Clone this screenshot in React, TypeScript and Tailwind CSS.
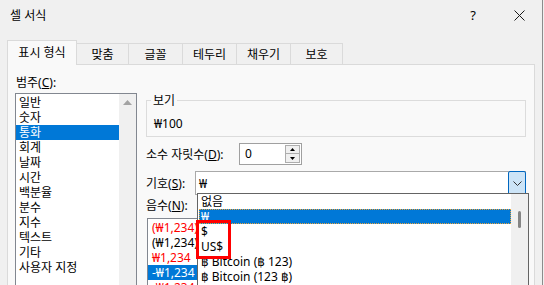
export default function App() {
  const cats = ['일반', '숫자', '통화', '회계', '날짜', '시간', '백분율', '분수', '지수', '텍스트', '기타', '사용자 지정'];
  const negs: { t: string; red: boolean; sel?: boolean }[] = [
    { t: '(₩1,234)', red: true },
    { t: '(₩1,234)', red: false },
    { t: '₩1,234', red: true },
    { t: '-₩1,234', red: false, sel: true },
    { t: '-₩1,234', red: true },
  ];
  return (
    <div className="relative w-[544px] h-[285px] overflow-hidden bg-[#f0f0f0] text-[12px] leading-[15px] text-black font-['Noto_Sans','Noto_Sans_CJK_KR','DejaVu_Sans',sans-serif]">
      <div className="w-[543px] h-full border-r border-[#8c8c8c]">
        {/* title bar */}
        <div className="h-[30px] flex items-center pl-[10px]">
          <span>셀 서식</span>
          <div className="flex-1" />
          <div className="w-[46px] h-[30px] flex items-center justify-center text-[13px]">?</div>
          <div className="w-[46px] h-[30px] flex items-center justify-center">
            <svg width="11" height="11" viewBox="0 0 11 11">
              <path d="M0.5 0.5 L10.5 10.5 M10.5 0.5 L0.5 10.5" stroke="#1a1a1a" strokeWidth="1" fill="none" />
            </svg>
          </div>
        </div>
        {/* tabs */}
        <div className="mt-[10px] h-[24px] flex items-end pl-[7px]">
          <div className="relative z-10 w-[70px] h-[25px] mb-[-1px] border-l border-t border-r border-[#dadada] bg-[#f9f9f9] flex items-center justify-center pb-[1px]">
            표시 형식
          </div>
          {[
            ['맞춤', 'w-[52px]'],
            ['글꼴', 'w-[54px]'],
            ['테두리', 'w-[54px]'],
            ['채우기', 'w-[54px]'],
            ['보호', 'w-[52px]'],
          ].map(([t, w]) => (
            <div key={t} className={`${w} h-[21px] border-t border-r border-[#dadada] flex items-center justify-center`}>
              {t}
            </div>
          ))}
        </div>
        {/* panel */}
        <div className="ml-[7px] w-[528px] h-[300px] border border-[#dadada] bg-[#f9f9f9] flex items-start">
          {/* left column */}
          <div className="ml-[7px] pt-[10px] w-[122px]">
            <div className="pl-[1px]">
              범주(<span className="underline">C</span>):
            </div>
            <div className="mt-[3px] h-[200px] border border-[#828790] bg-white flex">
              <div className="w-[103px] pt-[1px]">
                {cats.map((c, i) => (
                  <div
                    key={c}
                    className={`h-[15px] pl-[3px] ${i === 2 ? 'bg-[#0078d7] text-white' : ''}`}
                  >
                    {c}
                  </div>
                ))}
              </div>
              <div className="w-[17px] bg-[#f0f0f0]">
                <div className="h-[17px] flex items-center justify-center">
                  <svg width="9" height="5" viewBox="0 0 9 5">
                    <path d="M4.5 0 L9 5 L0 5 Z" fill="#a3a3a3" />
                  </svg>
                </div>
              </div>
            </div>
          </div>
          {/* right column */}
          <div className="ml-[9px] w-[380px]">
            <div className="mt-[35px] h-[37px] relative border border-[#dcdcdc]">
              <span className="absolute left-[4px] top-[-8px] px-[2px] bg-[#f9f9f9]">보기</span>
              <div className="pt-[15px] pl-[7px]">₩100</div>
            </div>
            <div className="mt-[6px] h-[22px] flex items-center">
              <div className="w-[93px]">
                소수 자릿수(<span className="underline">D</span>):
              </div>
              <div className="w-[63px] h-[22px] border border-[#a0a0a0] bg-white flex">
                <div className="flex-1 pl-[5px] leading-[20px]">0</div>
                <div className="w-[16px] flex flex-col justify-center gap-0 pr-[1px] py-[1px]">
                  <div className="h-[9px] border border-[#adadad] bg-[#f0f0f0] flex items-center justify-center">
                    <svg width="5" height="3" viewBox="0 0 5 3">
                      <path d="M2.5 0 L5 3 L0 3 Z" fill="#000" />
                    </svg>
                  </div>
                  <div className="h-[9px] border border-t-0 border-[#adadad] bg-[#f0f0f0] flex items-center justify-center">
                    <svg width="5" height="3" viewBox="0 0 5 3">
                      <path d="M0 0 L5 0 L2.5 3 Z" fill="#000" />
                    </svg>
                  </div>
                </div>
              </div>
            </div>
            <div className="mt-[6px] h-[24px] flex items-center">
              <div className="w-[51px]">
                기호(<span className="underline">S</span>):
              </div>
              <div className="w-[331px] shrink-0 h-[24px] border-y border-l border-[#a9a9a9] bg-white flex items-center">
                <div className="flex-1 pl-[3px]">₩</div>
                <div className="w-[18px] h-[24px] -my-px border border-[#0067c0] bg-[#cce4f7] rounded-[2px] flex items-center justify-center">
                  <svg width="9" height="5" viewBox="0 0 9 5">
                    <path d="M0.5 0.5 L4.5 4.5 L8.5 0.5" stroke="#333" strokeWidth="1" fill="none" />
                  </svg>
                </div>
              </div>
            </div>
            <div className="mt-[3px]">
              음수(<span className="underline">N</span>):
            </div>
            <div className="mt-[5px] ml-[1px] w-[200px] h-[100px] border border-[#828790] bg-white pt-[1px]">
              {negs.map((n, i) => (
                <div
                  key={i}
                  className={`h-[15px] pl-[4px] ${n.sel ? 'bg-[#0078d7] text-white' : n.red ? 'text-[#ff0000]' : ''}`}
                >
                  {n.t}
                </div>
              ))}
            </div>
          </div>
        </div>
      </div>
      {/* open dropdown list */}
      <div className="absolute left-[197px] top-[193px] w-[332px] h-[100px] border border-[#646464] bg-white flex">
        <div className="flex-1">
          <div className="h-[15px] pl-[3px]">없음</div>
          <div className="h-[15px] ml-[1px] pl-[1px] leading-[13px] bg-[#0078d7] text-white border border-dotted border-[#e8a33c]">₩</div>
          <div className="h-[15px] pl-[3px]">$</div>
          <div className="h-[15px] pl-[3px]">US$</div>
          <div className="h-[15px] pl-[3px]">฿ Bitcoin (฿ 123)</div>
          <div className="h-[15px] pl-[3px]">฿ Bitcoin (123 ฿)</div>
        </div>
        <div className="w-[17px] bg-[#f0f0f0] pt-[17px] flex justify-center">
          <div className="w-[3px] h-[17px] bg-[#858585] rounded-full" />
        </div>
      </div>
      {/* red annotation box */}
      <div className="absolute left-[196px] top-[220px] w-[35px] h-[39px] border-[3px] border-[#ff0000]" />
    </div>
  );
}
